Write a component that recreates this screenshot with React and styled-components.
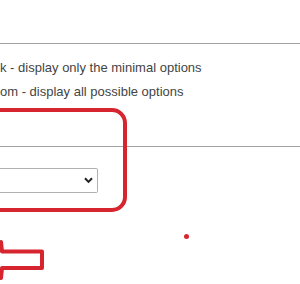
import React from "react";
import styled, { createGlobalStyle } from "styled-components";

const GlobalStyle = createGlobalStyle`
  html, body {
    margin: 0;
    padding: 0;
    background: #fff;
  }
  body {
    font-family: "Liberation Sans", Arial, sans-serif;
    font-size: 13px;
    color: #444;
  }
`;

const RED = "#d6252e";

const Page = styled.div`
  position: relative;
  width: 300px;
  height: 284px;
  overflow: hidden;
`;

const Header = styled.div`
  height: 43px;
`;

const Rule = styled.hr`
  margin: 0;
  border: 0;
  height: 1px;
  background: #a3a3a3;
`;

const OptionList = styled.ul`
  list-style: none;
  margin: 12px 0 0;
  padding: 0;
  height: 90px;
`;

const Option = styled.li`
  line-height: 24px;
  white-space: nowrap;
`;

const SelectWrap = styled.div`
  position: relative;
  width: 98px;
  height: 25px;
  margin-top: 21px;
`;

const Select = styled.select`
  appearance: none;
  -webkit-appearance: none;
  width: 100%;
  height: 100%;
  box-sizing: border-box;
  border: 1px solid #b0b0b0;
  border-left: 0;
  border-radius: 0 2px 2px 0;
  background: #fff;
  font: inherit;
  color: #333;
  outline: none;
`;

const Chevron = styled.svg`
  position: absolute;
  right: 5px;
  top: 9px;
  pointer-events: none;
`;

/* red annotation marks drawn over the screenshot */
const Highlight = styled.div`
  position: absolute;
  left: -30px;
  top: 108px;
  width: 157px;
  height: 104px;
  box-sizing: border-box;
  border: 4px solid ${RED};
  border-radius: 15px;
  pointer-events: none;
`;

const Dot = styled.span`
  position: absolute;
  left: 184px;
  top: 234px;
  width: 5px;
  height: 5px;
  border-radius: 50%;
  background: ${RED};
`;

const Arrow = styled.svg`
  position: absolute;
  left: 0;
  top: 0;
`;

export default function App() {
  return (
    <>
      <GlobalStyle />
      <Page>
        <Header />
        <Rule />
        <OptionList>
          <Option>k - display only the minimal options</Option>
          <Option>om - display all possible options</Option>
        </OptionList>
        <Rule />
        <SelectWrap>
          <Select defaultValue="">
            <option value=""></option>
          </Select>
          <Chevron width="9" height="7" viewBox="0 0 9 7">
            <path d="M1 1.2 L4.5 4.9 L8 1.2" fill="none" stroke="#222" strokeWidth="2" />
          </Chevron>
        </SelectWrap>
        <Highlight />
        <Dot />
        <Arrow width="300" height="284" viewBox="0 0 300 284">
          <path
            d="M-30 260 L1 242 L2 251.5 L42 251.5 L42 268 L2 268 L1 278 Z"
            fill="none"
            stroke={RED}
            strokeWidth="4"
            strokeLinejoin="round"
          />
        </Arrow>
      </Page>
    </>
  );
}
